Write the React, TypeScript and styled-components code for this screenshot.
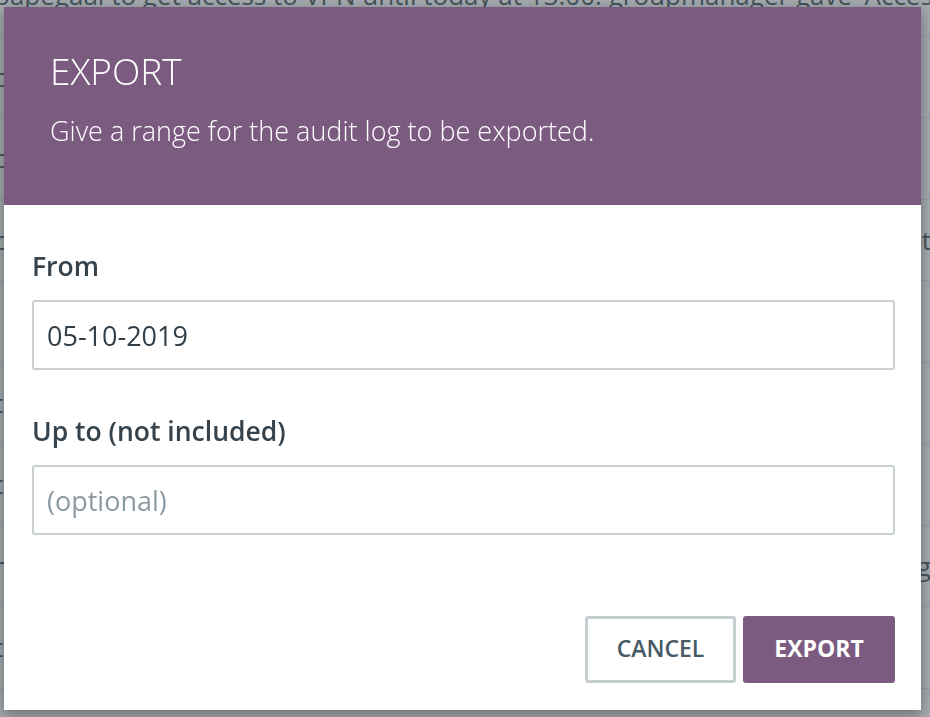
import React from 'react'
import styled, { createGlobalStyle } from 'styled-components'

const GlobalStyle = createGlobalStyle`
  html, body {
    margin: 0;
    padding: 0;
    height: 100%;
    overflow: hidden;
  }
  body {
    font-family: "Open Sans", "Liberation Sans", sans-serif;
    background: #ffffff;
  }
`

const Page = styled.div`
  width: 930px;
  height: 717px;
  overflow: hidden;
  position: relative;
`

const LogList = styled.div`
  margin-top: -45px;
  margin-left: -6px;
  width: 937px;
`

const LogRow = styled.div`
  height: 81.5px;
  box-sizing: border-box;
  display: flex;
  align-items: center;
  justify-content: space-between;
  border-bottom: 1px solid #dfe4e7;
  font-size: 26px;
  color: #333f48;
  white-space: nowrap;
  overflow: hidden;
`

const Backdrop = styled.div`
  position: fixed;
  inset: 0;
  background: rgba(86, 97, 104, 0.55);
  display: flex;
  align-items: flex-start;
  padding: 7px 0 0 4px;
`

const Modal = styled.div`
  width: 917px;
  background: #ffffff;
  box-shadow: 0 4px 12px rgba(0, 0, 0, 0.35);
`

const Header = styled.div`
  height: 198px;
  box-sizing: border-box;
  background: #7b5b80;
  padding: 40px 46px 0;
  color: #ffffff;
`

const Title = styled.h2`
  margin: 0;
  font-size: 37px;
  font-weight: 300;
  line-height: 48px;
`

const Subtitle = styled.p`
  margin: 18px 0 0;
  font-size: 27px;
  font-weight: 300;
  line-height: 36px;
`

const Body = styled.div`
  padding: 43px 26px 27px 28px;
`

const Label = styled.label`
  display: block;
  font-size: 26.5px;
  font-weight: 600;
  line-height: 36px;
  color: #37434c;
  margin-bottom: 16px;
`

const Input = styled.input<{ $last?: boolean }>`
  display: block;
  width: 100%;
  height: 70px;
  box-sizing: border-box;
  border: 2px solid #c9d0d4;
  border-radius: 3px;
  padding: 0 13px;
  font-family: inherit;
  font-size: 27px;
  color: #333f48;
  outline: none;
  margin-bottom: ${p => (p.$last ? '81px' : '43px')};

  &::placeholder {
    color: #8c99a1;
  }
`

const Actions = styled.div`
  display: flex;
  justify-content: flex-end;
  gap: 7px;
`

const Button = styled.button<{ $primary?: boolean }>`
  width: ${p => (p.$primary ? '152px' : '151px')};
  height: 67px;
  box-sizing: border-box;
  border-radius: 3px;
  padding: 0 0 4px;
  font-family: inherit;
  font-size: 23px;
  font-weight: ${p => (p.$primary ? 700 : 600)};
  color: ${p => (p.$primary ? '#ffffff' : '#475a66')};
  background: ${p => (p.$primary ? '#7b5b80' : '#ffffff')};
  border: ${p => (p.$primary ? 'none' : '3px solid #c6cdd1')};
  cursor: pointer;
`

const rows: [string, string][] = [
  ["papegaai to get access to VPN until today at 13:00. groupmanager gave 'Access to VPN'", ''],
  ['on request of jdoe for the group Operations to access the shared drive', ''],
  ['oppegaai was granted the role Administrator by groupmanager until today', ''],
  ['properties of the service Wiki were updated by admin at 11:42', 'at'],
  [', the group Developers was linked to the service Mail by admin', ''],
  ['t the user bwayne requested membership for the group Finance', ''],
  ['  the request was approved by groupmanager on behalf of Operations', ''],
  ['h the group Support removed the role Viewer from ckent this morning', 'ing'],
  ['  the audit log was exported by admin for the selected date range', ''],
  ['  the service Calendar was created by admin and linked to Developers', ''],
]

const App: React.FC = (): JSX.Element => {
  return (
    <>
      <GlobalStyle />
      <Page>
        <LogList>
          {rows.map(([left, right], i) => (
            <LogRow key={i}>
              <span>{left}</span>
              <span>{right}</span>
            </LogRow>
          ))}
        </LogList>
        <Backdrop>
          <Modal>
            <Header>
              <Title>EXPORT</Title>
              <Subtitle>Give a range for the audit log to be exported.</Subtitle>
            </Header>
            <Body>
              <Label htmlFor="from">From</Label>
              <Input id="from" defaultValue="05-10-2019" />
              <Label htmlFor="upto">Up to (not included)</Label>
              <Input id="upto" placeholder="(optional)" $last />
              <Actions>
                <Button>CANCEL</Button>
                <Button $primary>EXPORT</Button>
              </Actions>
            </Body>
          </Modal>
        </Backdrop>
      </Page>
    </>
  )
}

export default App
